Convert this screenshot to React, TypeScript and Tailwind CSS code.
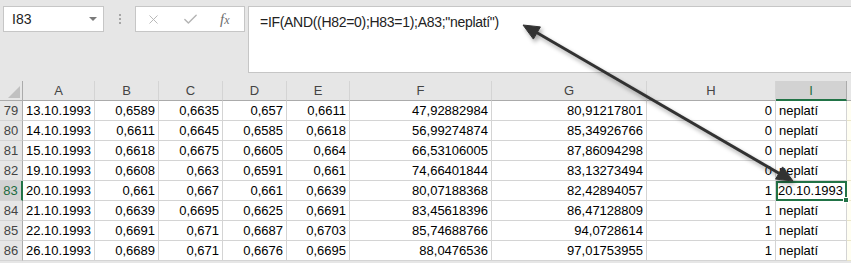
import { X, Check } from 'lucide-react';

type Row = {
  n: number;
  a: string;
  b: string;
  c: string;
  d: string;
  e: string;
  f: string;
  g: string;
  h: string;
  i: string;
};

const rows: Row[] = [
  { n: 79, a: '13.10.1993', b: '0,6589', c: '0,6635', d: '0,657', e: '0,6611', f: '47,92882984', g: '80,91217801', h: '0', i: 'neplatí' },
  { n: 80, a: '14.10.1993', b: '0,6611', c: '0,6645', d: '0,6585', e: '0,6618', f: '56,99274874', g: '85,34926766', h: '0', i: 'neplatí' },
  { n: 81, a: '15.10.1993', b: '0,6618', c: '0,6675', d: '0,6605', e: '0,664', f: '66,53106005', g: '87,86094298', h: '0', i: 'neplatí' },
  { n: 82, a: '19.10.1993', b: '0,6608', c: '0,663', d: '0,6591', e: '0,661', f: '74,66401844', g: '83,13273494', h: '0', i: 'neplatí' },
  { n: 83, a: '20.10.1993', b: '0,661', c: '0,667', d: '0,661', e: '0,6639', f: '80,07188368', g: '82,42894057', h: '1', i: '20.10.1993' },
  { n: 84, a: '21.10.1993', b: '0,6639', c: '0,6695', d: '0,6625', e: '0,6691', f: '83,45618396', g: '86,47128809', h: '1', i: 'neplatí' },
  { n: 85, a: '22.10.1993', b: '0,6691', c: '0,671', d: '0,6687', e: '0,6703', f: '85,74688766', g: '94,0728614', h: '1', i: 'neplatí' },
  { n: 86, a: '26.10.1993', b: '0,6689', c: '0,671', d: '0,6676', e: '0,6695', f: '88,0476536', g: '97,01753955', h: '1', i: 'neplatí' },
];

const cols = ['A', 'B', 'C', 'D', 'E', 'F', 'G', 'H', 'I'];

const gridCols = 'grid grid-cols-[23px_72px_64px_64px_64px_63px_142px_155px_129px_71px_1fr]';

function Cell({ children, left }: { children?: React.ReactNode; left?: boolean }) {
  return (
    <div
      className={`h-[20px] border-r border-b border-[#d4d4d4] bg-white pr-[3px] pl-[3px] leading-[20px] text-black whitespace-nowrap overflow-hidden ${left ? 'text-left' : 'text-right'}`}
    >
      {children}
    </div>
  );
}

export default function App() {
  return (
    <div className="relative h-[263px] w-[851px] overflow-hidden bg-[#e6e6e6] font-['Liberation_Sans',Arial,sans-serif] text-[13px]">
      {/* formula bar */}
      <div className="flex h-[81px] items-start pt-[6px] pl-[3px]">
        <div className="flex h-[26px] w-[101px] items-center justify-between border border-[#c6c6c6] bg-white pl-[8px] pr-[6px] text-[14px] text-[#222]">
          <span>I83</span>
          <span className="h-0 w-0 border-x-[4px] border-t-[4px] border-x-transparent border-t-[#7a7a7a]" />
        </div>
        <div className="flex w-[31px] flex-col items-center gap-[2px] pt-[8px]">
          <span className="h-[2px] w-[2px] bg-[#a6a6a6]" />
          <span className="h-[2px] w-[2px] bg-[#a6a6a6]" />
          <span className="h-[2px] w-[2px] bg-[#a6a6a6]" />
        </div>
        <div className="flex h-[26px] w-[110px] items-center border border-[#c6c6c6] bg-white pl-[10px] text-[#b4b4b4]">
          <X className="h-[15px] w-[15px]" strokeWidth={1.5} />
          <Check className="ml-[21px] h-[17px] w-[17px]" strokeWidth={2} />
          <span className="ml-[21px] font-['Liberation_Serif',serif] text-[15px] italic text-[#6e6e6e]">
            f<span className="text-[12px]">x</span>
          </span>
        </div>
        <div className="ml-[3px] h-[67px] flex-1 border-y border-l border-[#c6c6c6] bg-white pl-[11px] pt-[5px] text-[14px] tracking-[-0.3px] text-[#222]">
          =IF(AND((H82=0);H83=1);A83;"neplatí")
        </div>
      </div>

      {/* sheet */}
      <div className={gridCols}>
        <div className="relative h-[20px] border-r border-b border-[#ababab] bg-[#e6e6e6]">
          <span className="absolute right-[2px] bottom-[2px] h-0 w-0 border-b-[12px] border-l-[12px] border-b-[#c0c0c0] border-l-transparent" />
        </div>
        {cols.map((c) => (
          <div
            key={c}
            className={
              c === 'I'
                ? 'h-[20px] border-r border-b-2 border-r-[#ababab] border-b-[#217346] bg-[#d2d2d2] text-center leading-[20px] text-[#1e6b40]'
                : 'h-[20px] border-r border-b border-r-[#d4d4d4] border-b-[#ababab] bg-[#e6e6e6] text-center leading-[20px] text-[#444]'
            }
          >
            {c}
          </div>
        ))}
        <div className="h-[20px] border-b border-[#ababab] bg-[#e6e6e6]" />

        {rows.map((r) => {
          const sel = r.n === 83;
          return [
            <div
              key={`h${r.n}`}
              className={
                sel
                  ? 'h-[20px] border-r-2 border-b border-r-[#217346] border-b-[#d4d4d4] bg-[#d2d2d2] text-center leading-[20px] text-[#1e6b40]'
                  : 'h-[20px] border-r border-b border-r-[#ababab] border-b-[#d4d4d4] bg-[#e6e6e6] text-center leading-[20px] text-[#444]'
              }
            >
              {r.n}
            </div>,
            <Cell key={`a${r.n}`} left>{r.a}</Cell>,
            <Cell key={`b${r.n}`}>{r.b}</Cell>,
            <Cell key={`c${r.n}`}>{r.c}</Cell>,
            <Cell key={`d${r.n}`}>{r.d}</Cell>,
            <Cell key={`e${r.n}`}>{r.e}</Cell>,
            <Cell key={`f${r.n}`}>{r.f}</Cell>,
            <Cell key={`g${r.n}`}>{r.g}</Cell>,
            <Cell key={`hh${r.n}`}>{r.h}</Cell>,
            sel ? (
              <div
                key={`i${r.n}`}
                className="relative h-[20px] border-2 border-[#217346] bg-white pr-[2px] text-right leading-[16px] text-black"
              >
                {r.i}
                <span className="absolute -right-[4px] -bottom-[4px] h-[6px] w-[6px] border border-white bg-[#217346]" />
              </div>
            ) : (
              <Cell key={`i${r.n}`} left>{r.i}</Cell>
            ),
            <div key={`j${r.n}`} className="h-[20px] border-b border-[#e8e4c8] bg-[#fffef2]" />,
          ];
        })}
      </div>

      {/* annotation arrow */}
      <svg className="pointer-events-none absolute top-0 left-0" width="851" height="263">
        <defs>
          <filter id="sh" x="-10%" y="-10%" width="130%" height="130%">
            <feDropShadow dx="2" dy="3" stdDeviation="2" floodColor="#000" floodOpacity="0.35" />
          </filter>
        </defs>
        <g filter="url(#sh)" fill="#333" stroke="#333">
          <line x1="534" y1="31" x2="782" y2="175" strokeWidth="3" />
          <polygon points="523,25 533.4,39.1 540.4,26.9" strokeWidth="1" />
          <polygon points="793,181 775.6,179.1 782.6,166.9" strokeWidth="1" />
        </g>
      </svg>
    </div>
  );
}
